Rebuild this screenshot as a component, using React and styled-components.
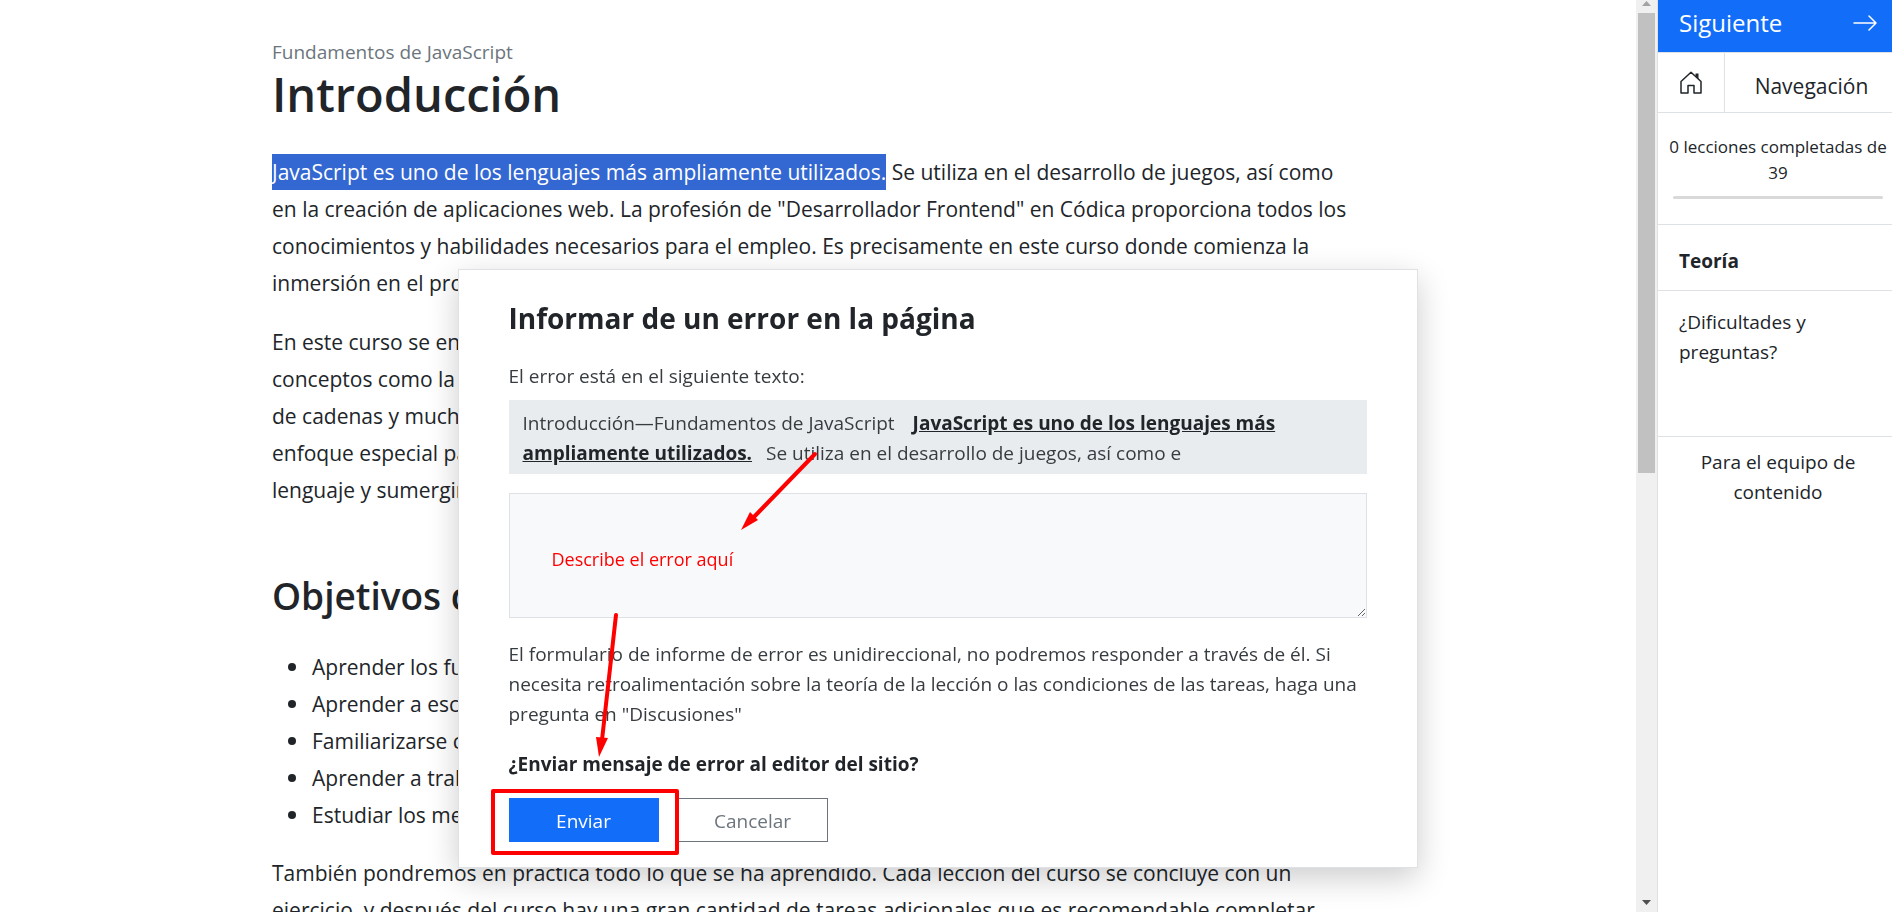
import React, { useState } from 'react'
import styled, { createGlobalStyle } from 'styled-components'

const GlobalStyle = createGlobalStyle`
    * {
        box-sizing: border-box;
    }

    body {
        margin: 0px;
        height: 100vh;
        overflow: hidden;
        background: #ffffff;
        color: #212529;
        font-family: "Open Sans", "Noto Sans", sans-serif;
        font-size: 19px;
        line-height: 30px;
    }
`

const Page = styled.div`
    display: flex;
    height: 100vh;
    overflow: hidden;
`

const Main = styled.main`
    flex: 1;
    min-width: 0;
    overflow: hidden;
`

const Lesson = styled.article`
    max-width: 1092px;
    margin: 0 auto;
    padding: 37px 8px 0px 0px;
    font-size: 21px;
    line-height: 37px;
`

const Course = styled.div`
    font-size: 19px;
    line-height: 30px;
    color: #6c757d;
`

const LessonTitle = styled.h1`
    margin: 0px 0px 33px 0px;
    font-size: 47px;
    font-weight: 600;
    line-height: 54px;
`

const LessonSubtitle = styled.h2`
    margin: 65px 0px 31px 0px;
    font-size: 37px;
    font-weight: 600;
    line-height: 44px;
`

const Paragraph = styled.p`
    margin: 0px 0px 22px 0px;
`

const Selected = styled.mark`
    padding: 4px 0px;
    background: #3367d1;
    color: #ffffff;
`

const Goals = styled.ul`
    margin: 0px 0px 21px 0px;
    padding: 0px 0px 0px 40px;
    list-style: none;
`

const Goal = styled.li`
    &::before {
        content: "";
        display: inline-block;
        width: 8px;
        height: 8px;
        margin: 0px 16px 0px -24px;
        border-radius: 50%;
        background: #212529;
        vertical-align: 4px;
    }
`

const Scrollbar = styled.div`
    display: flex;
    flex-direction: column;
    justify-content: space-between;
    width: 21px;
    padding: 0px 2px;
    background: #f0f0f0;
`

const ScrollThumb = styled.div`
    flex: 0 0 50.4%;
    background: #c1c1c1;
`

const ScrollArrow = styled.svg`
    display: block;
    width: 17px;
    height: 13px;
    fill: ${props => props.$active ? '#505050' : '#a3a3a3'};
`

const ScrollSpace = styled.div`
    flex: 1;
`

const Sidebar = styled.aside`
    width: 235px;
    border-left: 1px solid #dee2e6;
`

const NextLink = styled.a`
    display: flex;
    justify-content: space-between;
    align-items: center;
    height: 52px;
    padding: 0px 15px 6px 21px;
    background: #126ef8;
    color: #ffffff;
    font-size: 24px;
    text-decoration: none;
`

const NavRow = styled.nav`
    display: flex;
    height: 61px;
    border-top: 1px solid #dee2e6;
    border-bottom: 1px solid #dee2e6;
`

const HomeLink = styled.a`
    display: flex;
    justify-content: center;
    align-items: center;
    width: 67px;
    border-right: 1px solid #dee2e6;
    color: #212529;
`

const NavButton = styled.button`
    flex: 1;
    padding: 6px 0px 0px 6px;
    border: none;
    background: transparent;
    color: #212529;
    font-family: inherit;
    font-size: 21px;
`

const Progress = styled.div`
    height: 112px;
    padding: 21px 2px 0px 8px;
    border-bottom: 1px solid #dee2e6;
    font-size: 17px;
    line-height: 26px;
    text-align: center;
`

const ProgressBar = styled.div`
    height: 3px;
    margin: 10px 7px 0px 7px;
    border-radius: 2px;
    background: #d9d9d9;
`

const SideItem = styled.a`
    display: block;
    padding: ${props => props.$tall ? '16px 60px 69px 21px' : '21px 21px 14px 21px'};
    border-bottom: 1px solid #dee2e6;
    color: #212529;
    font-weight: ${props => props.$active ? 700 : 400};
    text-decoration: none;
`

const TeamLink = styled.a`
    display: block;
    padding: 10px 24px 10px 30px;
    color: #212529;
    text-align: center;
    text-decoration: none;
`

const Overlay = styled.div`
    position: fixed;
    inset: 0px;
    display: flex;
    justify-content: center;
    align-items: flex-start;
    padding: 269px 17px 0px 0px;
`

const Modal = styled.form`
    position: relative;
    width: 960px;
    padding: 30px 50px 25px 50px;
    border: 1px solid #dee2e6;
    background: #ffffff;
    box-shadow: 0px 10px 30px rgba(0, 0, 0, 0.2);
    color: #373c41;
`

const ModalTitle = styled.h2`
    margin: 0px 0px 25px 0px;
    font-size: 28px;
    font-weight: 700;
    line-height: 36px;
    color: #212529;
`

const ErrorLabel = styled.label`
    display: block;
    margin-bottom: 9px;
`

const Quote = styled.div`
    margin-bottom: 19px;
    padding: 8px 14px 6px 14px;
    background: #e9ecef;

    & > strong {
        margin: 0px 14px 0px 18px;
        color: #212529;
        text-decoration: underline;
    }
`

const Comment = styled.textarea`
    display: block;
    width: 100%;
    height: 125px;
    margin-bottom: 21px;
    padding: 7px 14px;
    border: 1px solid #dee2e6;
    outline: none;
    background: #f8f9fa;
    font-family: inherit;
    font-size: 19px;
    resize: vertical;
`

const Info = styled.p`
    margin: 0px 0px 20px 0px;
`

const Question = styled.p`
    margin: 0px 0px 19px 0px;
    font-weight: 700;
    color: #212529;
`

const Buttons = styled.div`
    display: flex;
    gap: 19px;
`

const Button = styled.button`
    width: 150px;
    height: 44px;
    padding: 2px 0px 0px 0px;
    border: 1px solid ${props => props.$primary ? '#126ef8' : '#6c757d'};
    background: ${props => props.$primary ? '#126ef8' : '#ffffff'};
    color: ${props => props.$primary ? '#ffffff' : '#6c757d'};
    font-family: inherit;
    font-size: 19px;
`

/* red marks drawn over the form */
const Hint = styled.span`
    position: absolute;
    top: 274px;
    left: 93px;
    font-size: 18px;
    color: #ff0000;
    pointer-events: none;
`

const Arrows = styled.svg`
    position: absolute;
    top: 0px;
    left: 0px;
    width: 400px;
    height: 500px;
    pointer-events: none;
`

const Frame = styled.div`
    position: absolute;
    top: 519px;
    left: 32px;
    width: 188px;
    height: 66px;
    border: 4px solid #ff0000;
    border-radius: 2px;
    pointer-events: none;
`

const goals = [
    'Aprender los fundamentos de JavaScript',
    'Aprender a escribir programas simples',
    'Familiarizarse con las funciones',
    'Aprender a trabajar con variables',
    'Estudiar los mecanismos del lenguaje'
]

function ArrowRight() {
    return (
        <svg width="24" height="16" viewBox="0 0 24 16" fill="none" stroke="currentColor" strokeWidth="1.500" strokeLinecap="round" strokeLinejoin="round">
            <path d="M1 8h22M16 1l7 7l-7 7" />
        </svg>
    )
}

function House() {
    return (
        <svg width="22" height="23" viewBox="0 0 22 23" fill="none" stroke="currentColor" strokeWidth="1.500" strokeLinejoin="round">
            <path d="M1 10.500L11 1.200L21 10.500V22H14V14.500H8V22H1Z" />
            <path d="M15.500 2.500H18.500V8L15.500 5.200Z" fill="currentColor" stroke="none" />
        </svg>
    )
}

function ReportForm() {
    const [comment, setComment] = useState('')

    return (
        <Overlay>
            <Modal role="dialog" aria-labelledby="report-title" onSubmit={e => e.preventDefault()}>
                <ModalTitle id="report-title">Informar de un error en la página</ModalTitle>
                <ErrorLabel htmlFor="comment">El error está en el siguiente texto:</ErrorLabel>
                <Quote>
                    Introducción—Fundamentos de JavaScript
                    <strong>JavaScript es uno de los lenguajes más ampliamente utilizados.</strong>
                    Se utiliza en el desarrollo de juegos, así como e
                </Quote>
                <Comment id="comment" value={comment} onChange={e => setComment(e.target.value)} />
                <Info>
                    El formulario de informe de error es unidireccional, no podremos responder a través de él. Si
                    necesita retroalimentación sobre la teoría de la lección o las condiciones de las tareas, haga una
                    pregunta en "Discusiones"
                </Info>
                <Question>¿Enviar mensaje de error al editor del sitio?</Question>
                <Buttons>
                    <Button type="submit" $primary>Enviar</Button>
                    <Button type="button">Cancelar</Button>
                </Buttons>
                <Hint>Describe el error aquí</Hint>
                <Arrows viewBox="0 0 400 500" fill="#ff0000" stroke="#ff0000">
                    <path d="M356 184L292 250" strokeWidth="4" strokeLinecap="round" />
                    <path d="M282 260L291 242L299 250Z" stroke="none" />
                    <path d="M157 345L143 470" strokeWidth="4" strokeLinecap="round" />
                    <path d="M140 487L137 467L149 468Z" stroke="none" />
                </Arrows>
                <Frame />
            </Modal>
        </Overlay>
    )
}

export default function App() {
    return (
        <>
            <GlobalStyle />
            <Page>
                <Main>
                    <Lesson>
                        <Course>Fundamentos de JavaScript</Course>
                        <LessonTitle>Introducción</LessonTitle>
                        <Paragraph>
                            <Selected>JavaScript es uno de los lenguajes más ampliamente utilizados.</Selected>
                            {' '}Se utiliza en el desarrollo de juegos, así como
                            en la creación de aplicaciones web. La profesión de "Desarrollador Frontend" en Códica proporciona todos los
                            conocimientos y habilidades necesarios para el empleo. Es precisamente en este curso donde comienza la
                            inmersión en el programa.
                        </Paragraph>
                        <Paragraph>
                            En este curso se enseñan las bases del lenguaje<br />
                            conceptos como la lógica, las funciones<br />
                            de cadenas y mucho más. Se pone un<br />
                            enfoque especial para entender el<br />
                            lenguaje y sumergirse en él.
                        </Paragraph>
                        <LessonSubtitle>Objetivos del curso</LessonSubtitle>
                        <Goals>
                            {goals.map(goal => <Goal key={goal}>{goal}</Goal>)}
                        </Goals>
                        <Paragraph>
                            También pondremos en práctica todo lo que se ha aprendido. Cada lección del curso se concluye con un
                            ejercicio, y después del curso hay una gran cantidad de tareas adicionales que es recomendable completar
                        </Paragraph>
                    </Lesson>
                </Main>
                <Scrollbar>
                    <ScrollArrow viewBox="0 0 17 13"><path d="M4 6L8.500 1L13 6Z" /></ScrollArrow>
                    <ScrollThumb />
                    <ScrollSpace />
                    <ScrollArrow viewBox="0 0 17 13" $active><path d="M4 1L8.500 6L13 1Z" /></ScrollArrow>
                </Scrollbar>
                <Sidebar>
                    <NextLink href="#next">Siguiente <ArrowRight /></NextLink>
                    <NavRow>
                        <HomeLink href="#home" aria-label="Inicio"><House /></HomeLink>
                        <NavButton type="button">Navegación</NavButton>
                    </NavRow>
                    <Progress>
                        0 lecciones completadas de 39
                        <ProgressBar />
                    </Progress>
                    <SideItem href="#theory" $active>Teoría</SideItem>
                    <SideItem href="#questions" $tall>¿Dificultades y preguntas?</SideItem>
                    <TeamLink href="#team">Para el equipo de contenido</TeamLink>
                </Sidebar>
            </Page>
            <ReportForm />
        </>
    )
}
